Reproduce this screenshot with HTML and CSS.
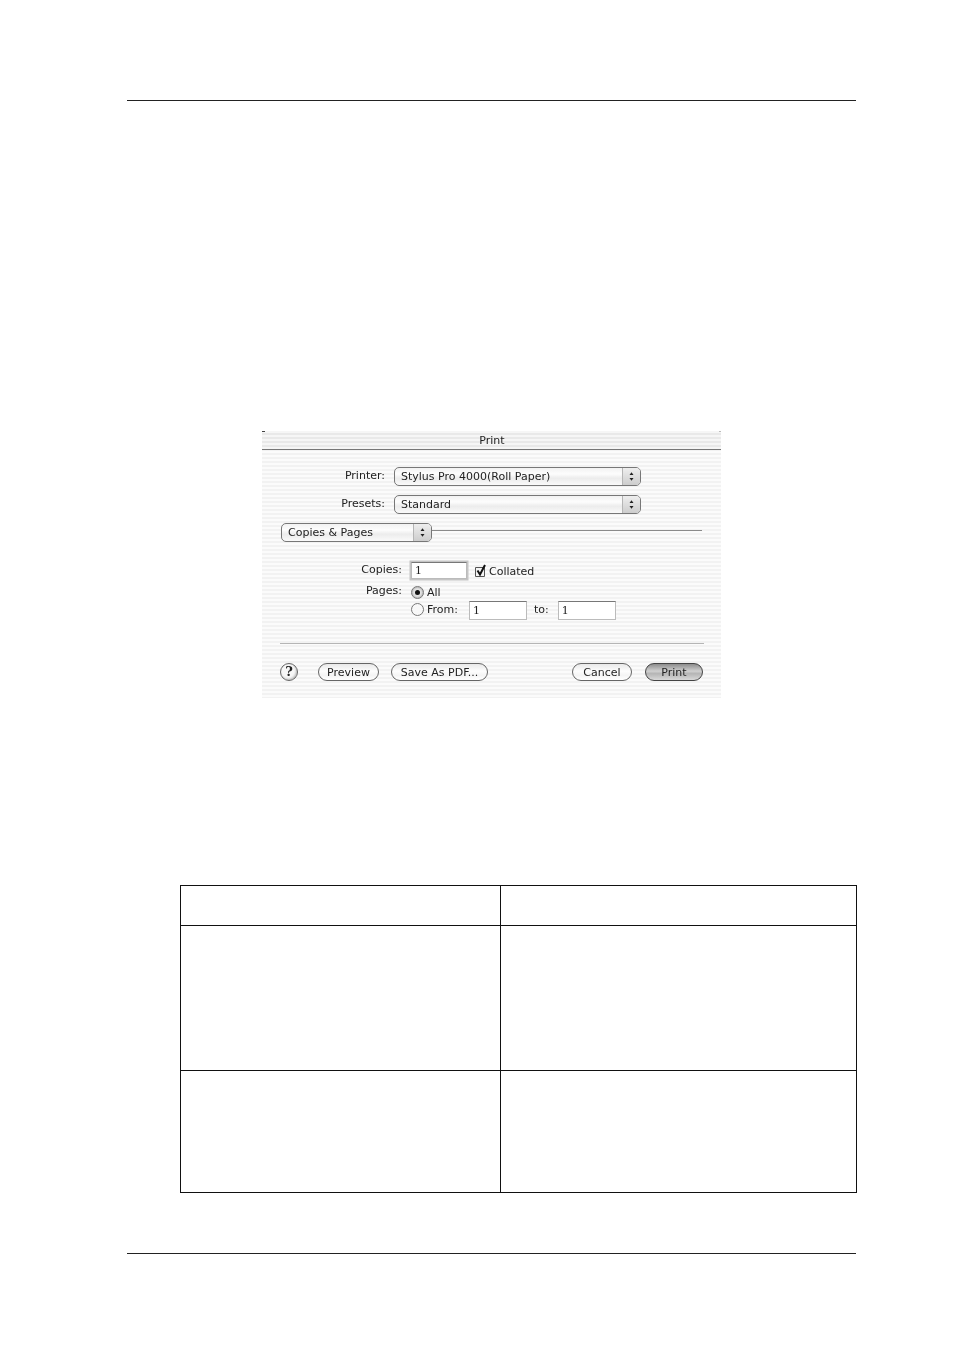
FILE: index.html
```html
<!DOCTYPE html>
<html lang="en">
<head>
<meta charset="utf-8">
<title>Print</title>
<link rel="stylesheet" href="styles.css">
</head>
<body>
<main class="page">
  <hr class="rule rule-top">
  <section class="dialog">
    <header class="titlebar">Print</header>
    <div class="row row-printer">
      <span class="label label-main">Printer:</span>
      <div class="popup popup-wide"><span class="popup-text">Stylus Pro 4000(Roll Paper)</span><span class="stepper"><svg viewBox="0 0 7 11" width="7" height="11"><path d="M3.5 1.2 5.5 4H1.5zM3.5 9.8 1.5 7h4z" fill="#222"/></svg></span></div>
    </div>
    <div class="row row-presets">
      <span class="label label-main">Presets:</span>
      <div class="popup popup-wide"><span class="popup-text">Standard</span><span class="stepper"><svg viewBox="0 0 7 11" width="7" height="11"><path d="M3.5 1.2 5.5 4H1.5zM3.5 9.8 1.5 7h4z" fill="#222"/></svg></span></div>
    </div>
    <div class="row row-pane">
      <div class="popup popup-pane"><span class="popup-text">Copies &amp; Pages</span><span class="stepper"><svg viewBox="0 0 7 11" width="7" height="11"><path d="M3.5 1.2 5.5 4H1.5zM3.5 9.8 1.5 7h4z" fill="#222"/></svg></span></div>
      <span class="pane-line"></span>
    </div>
    <div class="row row-copies">
      <span class="label label-form label-copies">Copies:</span>
      <span class="field field-focus">1</span>
      <span class="check"><svg viewBox="0 0 13 14" width="13" height="14"><path d="M1.5 3.5h9v9h-9z" fill="#f4f4f4" stroke="#555"/><path d="M3.5 6.5 6 10.5 11 1" fill="none" stroke="#111" stroke-width="2"/></svg></span>
      <span class="opt opt-collated">Collated</span>
    </div>
    <div class="row row-all">
      <span class="label label-form label-pages">Pages:</span>
      <span class="radio radio-on"></span>
      <span class="opt">All</span>
    </div>
    <div class="row row-from">
      <span class="label label-form"></span>
      <span class="radio radio-from"></span>
      <span class="opt opt-from">From:</span>
      <span class="field field-range">1</span>
      <span class="opt opt-to">to:</span>
      <span class="field field-range">1</span>
    </div>
    <hr class="separator">
    <div class="row row-buttons">
      <span class="help">?</span>
      <button class="btn btn-preview" type="button">Preview</button>
      <button class="btn btn-pdf" type="button">Save As PDF...</button>
      <button class="btn btn-cancel" type="button">Cancel</button>
      <button class="btn btn-print" type="button">Print</button>
    </div>
  </section>
  <table class="grid">
    <tr class="tr-head"><td class="col-a"></td><td></td></tr>
    <tr class="tr-mid"><td class="col-a"></td><td></td></tr>
    <tr class="tr-end"><td class="col-a"></td><td></td></tr>
  </table>
  <hr class="rule rule-bottom">
</main>
</body>
</html>
```
FILE: styles.css
```css
* { box-sizing: border-box; }
html, body { margin: 0; padding: 0; background: #fff; }
.page { width: 954px; height: 1345px; padding-top: 100px; display: flex; flex-direction: column; }
.rule { border: 0; height: 1px; background: #222; margin: 0 0 0 127px; width: 729px; flex: none; }
.rule-bottom { margin-top: 60px; }

.dialog {
  width: 459px; height: 267px; margin: 330px 0 0 262px; flex: none;
  display: flex; flex-direction: column; position: relative;
  font-family: "DejaVu Sans", sans-serif; font-size: 11px; color: #222;
  background: repeating-linear-gradient(#fbfbfb 0 2px, #f2f2f2 2px 4px);
  filter: blur(.35px);
}
.dialog::before { content: ""; position: absolute; left: 0; top: 0; width: 3px; height: 1px; background: #444; }
.dialog::after { content: ""; position: absolute; right: 0; top: 0; width: 2px; height: 1px; background: #bbb; }
.titlebar {
  height: 19px; flex: none; text-align: center; line-height: 19px;
  border-bottom: 1px solid #777; padding-left: 1px;
  background: repeating-linear-gradient(#f6f6f6 0 2px, #e9e9e9 2px 4px);
}
.row { display: flex; align-items: center; flex: none; }
.label { text-align: right; flex: none; }
.label-main { width: 123px; margin-right: 9px; transform: translateY(-1px); }
.label-form { width: 140px; margin-right: 9px; }
.label-copies { transform: translateY(-1px); }
.row-printer { margin-top: 17px; height: 19px; }
.row-presets { margin-top: 9px; height: 19px; }
.row-pane { margin-top: 9px; height: 19px; padding-left: 19px; padding-right: 19px; }
.popup {
  height: 19px; display: flex; align-items: center; justify-content: space-between;
  border: 1px solid #777; border-radius: 5px; flex: none;
  background: linear-gradient(#f2f2f2, #fdfdfd 35%, #ececec 60%, #fafafa);
  overflow: hidden;
}
.popup-wide { width: 247px; }
.popup-pane { width: 151px; }
.popup-text { padding-left: 6px; }
.stepper {
  width: 18px; height: 100%; display: flex; align-items: center; justify-content: center;
  border-left: 1px solid #b5b5b5; background: linear-gradient(#eeeeee, #cdcdcd);
}
.pane-line { flex: 1; height: 1px; background: #8a8a8a; margin-bottom: 4px; }
.row-copies { margin-top: 20px; height: 17px; }
.field {
  display: block; background: #fff; border: 1px solid #bbb; border-top-color: #777;
  font-family: "DejaVu Serif", serif; font-size: 11px; line-height: 17px; padding-left: 3px; flex: none;
}
.field-focus { width: 56px; height: 17px; line-height: 16px; box-shadow: 0 0 0 1.5px #c4c4c4; }
.check { margin-left: 7px; width: 13px; height: 14px; flex: none; display: flex; }
.opt { flex: none; margin-left: 3px; }
.opt-collated { margin-top: 1px; margin-left: 2px; }
.row-all { margin-top: 6px; height: 14px; }
.label-pages { transform: translateY(-2px); margin-right: 9px; }
.radio {
  width: 13px; height: 13px; border-radius: 50%; border: 1px solid #777; flex: none;
  background: #f8f8f8; display: flex; align-items: center; justify-content: center;
}
.radio-on { background: #e4e4e4; box-shadow: inset 0 0 2px #777; }
.radio-on::after { content: ""; width: 5px; height: 5px; border-radius: 50%; background: #111; }
.radio-from { transform: translateY(-1px); }
.row-from { margin-top: 2px; height: 19px; }
.opt-from { margin-right: 11px; transform: translateY(-1px); }
.field-range { width: 58px; height: 19px; }
.opt-to { margin: 0 9px 0 7px; transform: translateY(-1px); }
.separator { border: 0; height: 1px; background: #b5b5b5; margin: 23px 17px 0 18px; flex: none; }
.row-buttons { margin-top: 19px; height: 18px; padding-left: 18px; }
.help {
  width: 18px; height: 18px; border-radius: 50%; border: 1px solid #666; flex: none;
  background: #f7f7f7; box-shadow: inset -1px -1px 2px #bbb;
  font: bold 13px/16px "DejaVu Serif", serif; text-align: center; color: #222;
}
.btn {
  height: 18px; border: 1px solid #666; border-radius: 9px; padding: 2px 0 0; flex: none;
  font: 11px/14px "DejaVu Sans", sans-serif; color: #222;
  background: linear-gradient(#e9e9e9, #fdfdfd 45%, #f4f4f4 70%, #fff);
}
.btn-preview { width: 61px; margin-left: 20px; }
.btn-pdf { width: 97px; margin-left: 12px; }
.btn-cancel { width: 60px; margin-left: 84px; }
.btn-print {
  width: 58px; margin-left: 13px; border-color: #444;
  background: linear-gradient(#8d8d8d, #d0d0d0 45%, #b5b5b5 60%, #d8d8d8);
}

.grid {
  width: 677px; height: 308px; margin: 187px 0 0 180px; flex: none;
  border-collapse: collapse; table-layout: fixed;
}
.grid td { border: 1px solid #111; padding: 0; }
.col-a { width: 320px; }
.tr-head { height: 40px; }
.tr-mid { height: 145px; }
.tr-end { height: 122px; }
```
